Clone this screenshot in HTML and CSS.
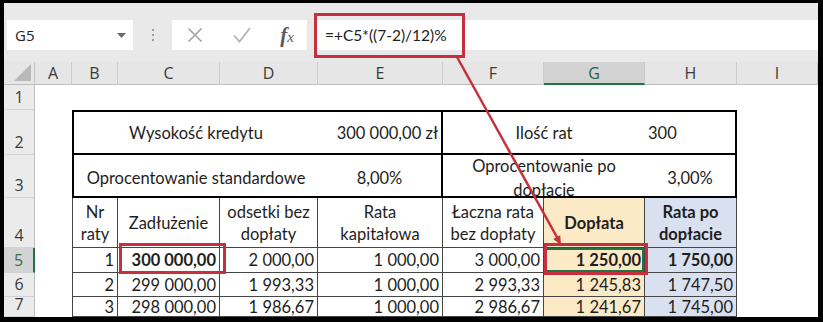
FILE: index.html
```html
<!DOCTYPE html>
<html lang="pl">
<head>
<meta charset="utf-8">
<title>Dopłata do kredytu</title>
<link rel="stylesheet" href="styles.css">
</head>
<body>
<div class="window">
  <div class="screen">
    <div class="formula-bar">
      <div class="name-box">
        <span>G5</span>
        <svg class="caret" width="9" height="5" viewBox="0 0 9 5"><path d="M0 0h9L4.5 5z" fill="#6a6a6a"/></svg>
      </div>
      <div class="grip"><i></i><i></i><i></i></div>
      <div class="fx-buttons">
        <svg width="16" height="16" viewBox="0 0 16 16"><path d="M1.5 1.5l13 13M14.5 1.5l-13 13" stroke="#a3a3a3" stroke-width="1.6" fill="none"/></svg>
        <svg width="18" height="16" viewBox="0 0 18 16"><path d="M1 8.5l5.5 6L17 1" stroke="#b4b4b4" stroke-width="1.8" fill="none"/></svg>
        <span class="fx">f<small>x</small></span>
      </div>
      <div class="formula">=+C5*((7-2)/12)%</div>
    </div>

    <div class="sheet">
      <!-- column headers -->
      <div class="corner"><svg width="17" height="17" viewBox="0 0 17 17"><path d="M17 0v17H0z" fill="#b9b9b9"/></svg></div>
      <div class="col-h">A</div>
      <div class="col-h">B</div>
      <div class="col-h">C</div>
      <div class="col-h">D</div>
      <div class="col-h">E</div>
      <div class="col-h">F</div>
      <div class="col-h selected">G</div>
      <div class="col-h">H</div>
      <div class="col-h">I</div>

      <!-- row 1 -->
      <div class="row-h">1</div>
      <div class="blank span-all"></div>

      <!-- row 2 -->
      <div class="row-h">2</div>
      <div class="blank"></div>
      <div class="c info info-top edge-l span3 mid">Wysokość kredytu</div>
      <div class="c info info-top edge-r num">300&nbsp;000,00 zł</div>
      <div class="c info info-top span2 mid">Ilość rat</div>
      <div class="c info info-top edge-r">300</div>
      <div class="blank"></div>

      <!-- row 3 -->
      <div class="row-h">3</div>
      <div class="blank"></div>
      <div class="c info low edge-l span3 mid">Oprocentowanie standardowe</div>
      <div class="c info low edge-r mid">8,00%</div>
      <div class="c info low span2 mid wrap">Oprocentowanie po<br>dopłacie</div>
      <div class="c info low edge-r mid">3,00%</div>
      <div class="blank"></div>

      <!-- row 4 -->
      <div class="row-h">4</div>
      <div class="blank"></div>
      <div class="c grid first mid wrap">Nr<br>raty</div>
      <div class="c grid mid">Zadłużenie</div>
      <div class="c grid mid wrap">odsetki bez<br>dopłaty</div>
      <div class="c grid mid wrap">Rata<br>kapitałowa</div>
      <div class="c grid mid wrap">Łaczna rata<br>bez dopłaty</div>
      <div class="c grid gold mid bold">Dopłata</div>
      <div class="c grid blue mid wrap bold">Rata po<br>dopłacie</div>
      <div class="blank"></div>

      <!-- row 5 -->
      <div class="row-h selected">5</div>
      <div class="blank"></div>
      <div class="c grid first num">1</div>
      <div class="c grid num bold">300&nbsp;000,00</div>
      <div class="c grid num">2&nbsp;000,00</div>
      <div class="c grid num">1&nbsp;000,00</div>
      <div class="c grid num">3&nbsp;000,00</div>
      <div class="c grid gold num bold active">1&nbsp;250,00</div>
      <div class="c grid blue num bold">1&nbsp;750,00</div>
      <div class="blank"></div>

      <!-- row 6 -->
      <div class="row-h">6</div>
      <div class="blank"></div>
      <div class="c grid first num">2</div>
      <div class="c grid num">299&nbsp;000,00</div>
      <div class="c grid num">1&nbsp;993,33</div>
      <div class="c grid num">1&nbsp;000,00</div>
      <div class="c grid num">2&nbsp;993,33</div>
      <div class="c grid gold num">1&nbsp;245,83</div>
      <div class="c grid blue num">1&nbsp;747,50</div>
      <div class="blank"></div>

      <!-- row 7 -->
      <div class="row-h">7</div>
      <div class="blank"></div>
      <div class="c grid first num">3</div>
      <div class="c grid num">298&nbsp;000,00</div>
      <div class="c grid num">1&nbsp;986,67</div>
      <div class="c grid num">1&nbsp;000,00</div>
      <div class="c grid num">2&nbsp;986,67</div>
      <div class="c grid gold num">1&nbsp;241,67</div>
      <div class="c grid blue num">1&nbsp;745,00</div>
      <div class="blank"></div>
    </div>
  </div>

  <!-- red annotation marks drawn over the sheet -->
  <svg class="marks" width="823" height="322" viewBox="0 0 823 322">
    <g fill="none" stroke="#c62f3b" stroke-width="3">
      <rect x="315.5" y="14.5" width="148" height="42"/>
      <rect x="120.5" y="244.5" width="104" height="28"/>
      <rect x="545.5" y="244.5" width="101" height="29"/>
      <path d="M457 57L558 239" stroke-width="2.5"/>
    </g>
    <polygon points="561,245 553.2,239 560.2,235.2" fill="#c62f3b"/>
  </svg>
</div>
</body>
</html>
```

FILE: styles.css
```css
body { margin: 0; background: #fff; }

.window { position: relative; width: 823px; height: 322px; box-sizing: border-box; padding: 3px 5px 5px 4px; background: #000; overflow: hidden; }
.screen { height: 314px; background: #fff; overflow: hidden; }

/* formula bar */
.formula-bar { display: flex; align-items: flex-start; height: 59px; box-sizing: border-box; padding: 17px 0 0 3px; background: #e9e9e9; font-family: "Open Sans", sans-serif; }
.name-box { display: flex; align-items: center; justify-content: space-between; width: 126px; height: 30px; box-sizing: border-box; padding: 0 7px 0 8px; background: #fff; color: #222; font-size: 15px; }
.grip { display: flex; flex-direction: column; align-items: center; justify-content: center; gap: 3px; width: 39px; height: 30px; }
.grip i { display: block; width: 2px; height: 2px; background: #9c9c9c; }
.fx-buttons { display: flex; align-items: center; justify-content: space-between; width: 135px; height: 30px; box-sizing: border-box; padding: 0 13px 0 15px; background: #fff; }
.fx { font-family: "Liberation Serif", serif; font-style: italic; font-weight: bold; font-size: 21px; line-height: 1; color: #5a5a5a; }
.fx small { font-size: 15px; font-weight: normal; }
.formula { flex: 1; height: 30px; margin-left: 8px; box-sizing: border-box; padding-left: 10px; background: #fff; font-family: Lato, sans-serif; font-size: 15.5px; line-height: 30px; color: #222; }

/* sheet grid */
.sheet { display: grid; grid-template-columns: 31px 37px 46px 102px 98px 125px 101px 101px 92px 81px; grid-template-rows: 23px 25px 45px 43px 50px 25px 24px 20px; font-family: Lato, sans-serif; font-size: 16.5px; color: #1e1e1e; }

.corner { display: flex; align-items: flex-end; justify-content: flex-end; padding: 0 3px 3px 0; background: #e6e6e6; border-right: 1px solid #c4c4c4; border-bottom: 1px solid #bcbcbc; }
.col-h { display: flex; align-items: center; justify-content: center; box-sizing: border-box; background: #e6e6e6; border-right: 1px solid #cbcbcb; border-bottom: 1px solid #bcbcbc; font-family: "Open Sans", sans-serif; font-size: 16px; color: #3a3a3a; }
.col-h.selected { background: #d3d3d3; border-bottom: 2px solid #217346; color: #2b5c42; }
.row-h { display: flex; align-items: flex-end; justify-content: center; box-sizing: border-box; padding-bottom: 1px; background: #ebebeb; border-right: 1px solid #bcbcbc; border-bottom: 1px solid #d2d2d2; font-family: "Open Sans", sans-serif; font-size: 16px; line-height: 22px; color: #3a3a3a; }
.row-h.selected { background: #d3d3d3; border-right: 2px solid #217346; color: #3f6b55; align-items: center; padding: 0; }

.blank { background: #fff; }
.span-all { grid-column: span 9; }
.span3 { grid-column: span 3; }
.span2 { grid-column: span 2; }

.c { display: flex; align-items: center; box-sizing: border-box; padding: 0 3px; overflow: hidden; white-space: nowrap; background: #fff; }
.num { justify-content: flex-end; }
.mid { justify-content: center; text-align: center; }
.wrap { line-height: 22px; }
.bold { font-weight: bold; }

.info { border-bottom: 2px solid #000; }
.info-top { border-top: 2px solid #000; }
.info.low { padding-top: 5px; }
.info.low.wrap { padding-top: 4px; line-height: 24px; }
.edge-l { border-left: 2px solid #000; }
.edge-r { border-right: 2px solid #000; }

.grid { border-right: 1px solid #454545; border-bottom: 1px solid #454545; }
.grid.first { border-left: 1px solid #454545; }
.gold { background: #fce9c6; }
.blue { background: #d9e1f1; }
.active { box-shadow: inset 0 0 0 2px #217346; }

.marks { position: absolute; top: 0; left: 0; pointer-events: none; }
```
